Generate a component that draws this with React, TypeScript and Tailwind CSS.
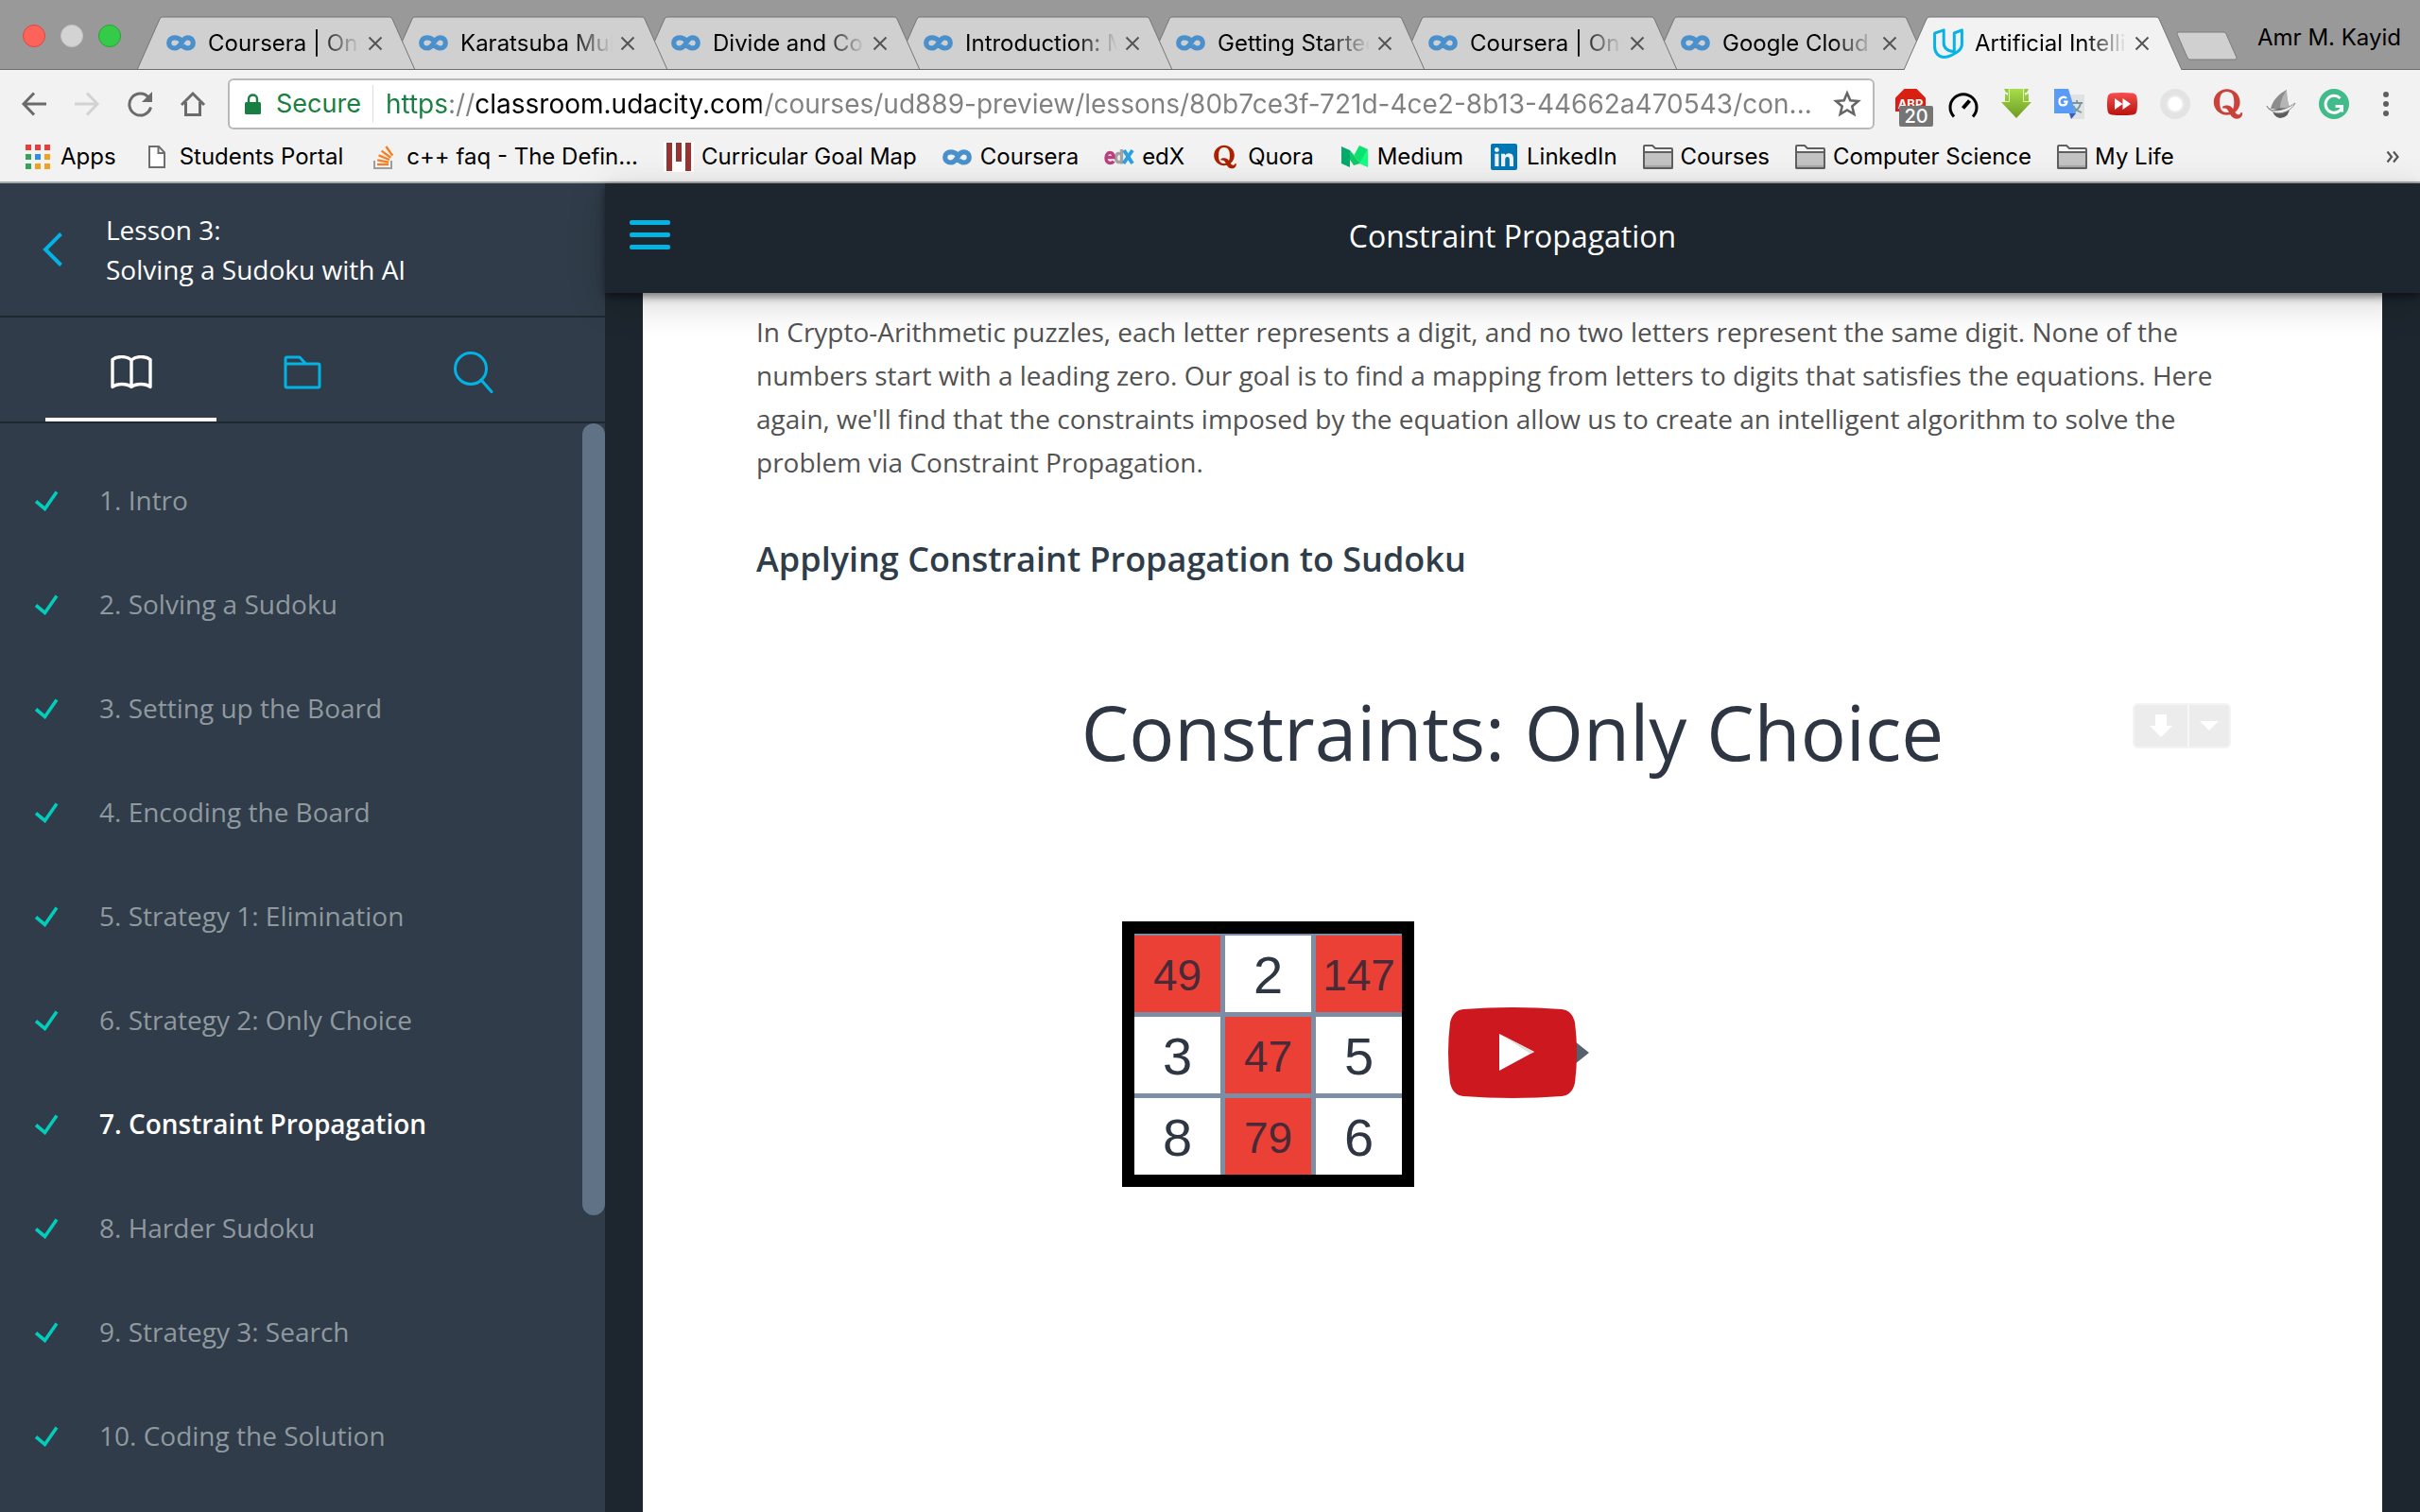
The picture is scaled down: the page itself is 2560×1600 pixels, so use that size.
import type { ReactNode } from "react";
import { FaLinkedin, FaQuora } from "react-icons/fa";

function CourseraIcon() {
  return (
    <svg viewBox="0 0 31 17" className="h-[17px] w-[31px]" fill="none" stroke="#4990cd" strokeWidth="5.2" aria-hidden="true">
      <path d="M15.6 5.6C13.6 3.6 11.6 2.8 9 2.8C5 2.8 2.7 5.3 2.7 8.4C2.7 11.7 5.2 14 9 14C16 14 15.6 2.8 22.4 2.8C26 2.8 28.3 5.3 28.3 8.5C28.3 11.7 26 14 22.4 14C20 14 18.4 13 17 11.2" />
    </svg>
  );
}

function UdacityIcon() {
  return (
    <svg viewBox="0 0 32 32" className="size-8" fill="none" stroke="#05b3e6" strokeWidth="3" strokeLinejoin="round" aria-hidden="true">
      <path d="M1.6 5.2L11.2 1.8V15.5C11.2 20.5 15 24.6 22.3 24.4V5L30.4 1.8V17C30.4 23 24 26 19 28.6C17 29.6 14 30.4 11.5 30.4C5.5 30.2 1.6 25.6 1.6 19.5Z" />
    </svg>
  );
}

function AppsIcon() {
  const colors = ["#f03a37", "#f03a37", "#f03a37", "#35a35c", "#2d8cf0", "#f0a21f", "#35a35c", "#f0a21f", "#f0a21f"];
  return (
    <svg viewBox="0 0 26 26" className="size-[26px]" aria-hidden="true">
      {colors.map((c, i) => (
        <rect key={i} x={(i % 3) * 10} y={Math.floor(i / 3) * 10} width="6" height="6" fill={c} />
      ))}
    </svg>
  );
}

function PageIcon() {
  return (
    <svg viewBox="0 0 18 24" className="h-6 w-[18px]" fill="#fff" stroke="#6e6e6e" strokeWidth="2" aria-hidden="true">
      <path d="M1 1H11L17 7.5V23H1Z" />
      <path d="M10.5 1V8H17" fill="none" />
    </svg>
  );
}

function StackIcon() {
  return (
    <svg viewBox="0 0 24 26" className="h-[26px] w-6" fill="none" aria-hidden="true">
      <path d="M2 17V25H20V17" stroke="#9c9fa1" strokeWidth="2" />
      <g stroke="#f48024" strokeWidth="2.4">
        <path d="M5 21H17" />
        <path d="M5.2 16.4L17.2 18.6" />
        <path d="M6.6 11.4L18 16" />
        <path d="M9.6 6.6L19.4 13.8" />
        <path d="M14.4 2L21.2 11.6" />
      </g>
    </svg>
  );
}

function GoalMapIcon() {
  return (
    <svg viewBox="0 0 32 32" className="size-8" aria-hidden="true">
      <rect width="32" height="32" fill="#fff" />
      <path d="M3 1h6v30H3zM13 1h6v20h-6zM23 1h6v30h-6z" fill="#993333" />
    </svg>
  );
}

function EdxIcon() {
  return (
    <svg viewBox="0 0 32 20" className="h-5 w-8" fill="none" aria-hidden="true">
      <path d="M18.5 2V17.5M18.5 8C17 5.5 12.5 5.5 12.5 11C12.5 16.5 17 16.5 18.5 14" stroke="#a3a3a3" strokeWidth="3.4" />
      <path d="M2.5 10.5H10C10 6.5 8.5 5.5 6.3 5.5C3.5 5.5 2 8 2 11C2 14.5 3.8 16.5 6.5 16.5C8.5 16.5 9.5 15.6 10 14.5" stroke="#b9417f" strokeWidth="3.4" />
      <path d="M21 3L30 17M30 3L20.5 17" stroke="#2ba0e4" strokeWidth="4" />
    </svg>
  );
}

function MediumIcon() {
  return (
    <svg viewBox="0 0 28 24" className="h-6 w-7" aria-hidden="true">
      <path d="M0 1L9 5V23L0 19Z" fill="#00ab6b" />
      <path d="M9 5L20 19L13 21L9 15Z" fill="#14c767" />
      <path d="M9 5L13.5 10L19 0L28 4L20 19Z" fill="#0be370" />
      <path d="M28 4V23L19 19Z" fill="#13ff80" />
    </svg>
  );
}

function FolderIcon() {
  return (
    <svg viewBox="0 0 32 26" className="h-[26px] w-8" stroke="#5f5f5f" strokeWidth="2" strokeLinejoin="round" aria-hidden="true">
      <path d="M1 24V2Q1 1 2 1H10L13 4H30Q31 4 31 5V24Q31 25 30 25H2Q1 25 1 24Z" fill="#f7f7f7" />
      <path d="M1 8H31V24Q31 25 30 25H2Q1 25 1 24Z" fill="#c3c3c3" />
      <path d="M2 23H30" stroke="#a8a8a8" />
    </svg>
  );
}

const tabs = ["Coursera | Online", "Karatsuba Multiply", "Divide and Conquer", "Introduction: Mod", "Getting Started w", "Coursera | Online", "Google Cloud Pl"];

function CloseIcon() {
  return (
    <svg viewBox="0 0 16 16" className="size-4" stroke="#555" strokeWidth="2" aria-hidden="true">
      <path d="M1.5 1.5L14.5 14.5M14.5 1.5L1.5 14.5" />
    </svg>
  );
}

function Tab({ title, active, order }: { title: string; active?: boolean; order: number }) {
  return (
    <div className="relative -mr-[27px] h-[57px] w-[294px]" style={{ zIndex: order }}>
      <svg viewBox="0 0 294 57" preserveAspectRatio="none" className="absolute inset-0 size-full" aria-hidden="true">
        <path
          d="M0 57L24 3Q25 1 27 1H267Q269 1 270 3L294 57"
          fill={active ? "#f2f2f2" : "#d0d0d0"}
          stroke="#757575"
          strokeWidth="1"
        />
        {!active && <path d="M0 56.5H294" stroke="#6c6c6c" />}
      </svg>
      <div className="relative flex h-full items-center pl-[31px]">
        <a href="#tab" className="flex min-w-0 items-center gap-3">
          <span className="flex w-8 shrink-0">{active ? <UdacityIcon /> : <CourseraIcon />}</span>
          <span className="w-[161px] overflow-hidden whitespace-nowrap mask-r-from-72% mask-r-to-100%">{title}</span>
        </a>
        <button type="button" aria-label={`Close ${title}`} className="ml-1 flex size-6 shrink-0 items-center justify-center">
          <CloseIcon />
        </button>
      </div>
    </div>
  );
}

function TabStrip() {
  return (
    <div className="flex h-[74px] items-end border-b border-[#6c6c6c] bg-[#999] pl-6">
      <div className="flex shrink-0 gap-4 self-start pt-[26px]">
        <button type="button" aria-label="Close window" className="size-6 rounded-full border border-[#e2463f] bg-[#fd625b]" />
        <button type="button" aria-label="Minimize window" className="size-6 rounded-full border border-[#c4c4c4] bg-[#d3d3d3]" />
        <button type="button" aria-label="Zoom window" className="size-6 rounded-full border border-[#25a534] bg-[#34cb49]" />
      </div>
      <nav aria-label="Browser tabs" className="isolate -mb-px ml-[17px] flex">
        {tabs.map((t, i) => (
          <Tab key={i} title={t} order={tabs.length - i} />
        ))}
        <Tab title="Artificial Intelligence" active order={20} />
      </nav>
      <button type="button" aria-label="New tab" className="ml-[21px] shrink-0 self-start pt-[33px]">
        <svg viewBox="0 0 66 32" className="h-8 w-[66px]" aria-hidden="true">
          <path d="M3 1H50Q52 1 53 3L64 28Q65 30 62 30H15Q13 30 12 28L1 3Q0 1 3 1Z" fill="#d0d0d0" stroke="#7d7d7d" />
        </svg>
      </button>
      <button type="button" className="ml-auto self-start pt-6 pr-5 leading-8 whitespace-nowrap">Amr M. Kayid</button>
    </div>
  );
}

function NavButton({ label, children }: { label: string; children: ReactNode }) {
  return (
    <button type="button" aria-label={label} className="flex size-7 shrink-0 items-center justify-center">
      <svg viewBox="0 0 28 28" className="size-7" fill="none" stroke="#6b6b6b" strokeWidth="3" aria-hidden="true">
        {children}
      </svg>
    </button>
  );
}

function Extension({ label, children }: { label: string; children: ReactNode }) {
  return (
    <button type="button" aria-label={label} className="relative size-8 shrink-0">
      <svg viewBox="0 0 32 32" className="size-8" aria-hidden="true">
        {children}
      </svg>
    </button>
  );
}

function Extensions() {
  return (
    <div className="flex shrink-0 items-center gap-6">
      <div className="relative flex">
        <Extension label="Ad blocker">
          <path d="M9.5 0H22.5L32 9.5V24H0V9.5Z" fill="#d81f12" />
          <text x="16" y="21" textAnchor="middle" fontSize="13" fontWeight="700" fill="#fff">ABP</text>
        </Extension>
        <span className="absolute top-[18px] left-1 w-9 rounded-xs bg-[#757575] text-center text-xl leading-[22px] font-medium text-white">20</span>
      </div>
      <Extension label="Speed">
        <path d="M6 29.5A14 14 0 1 1 26 29.5" fill="none" stroke="#000" strokeWidth="3" />
        <path d="M22.5 12.5L15.5 20.5" stroke="#000" strokeWidth="4" />
      </Extension>
      <Extension label="Downloader">
        <defs>
          <linearGradient id="down" x1="0" y1="0" x2="0" y2="1">
            <stop offset="0" stopColor="#a9dc4c" />
            <stop offset="1" stopColor="#6d9c22" />
          </linearGradient>
        </defs>
        <path d="M3 0H7V4H5ZM29 0H25V4H27Z" fill="#93cc3a" />
        <path d="M7 0H25V7L29 5V14H32L16 31L0 14H4V5L7 7Z" fill="url(#down)" />
        <path d="M8.5 0V13.5H2M23.5 0V13.5H30" fill="none" stroke="#dff5b5" strokeWidth="1" />
      </Extension>
      <Extension label="Translate">
        <path d="M12 6H32V32H17Z" fill="#dfe1e3" />
        <path d="M18 15H30M24 12V15M28 15C27 20 24 23 20 25M20.5 18C22 22 26 24 29 25" fill="none" stroke="#7796a0" strokeWidth="1.8" />
        <path d="M16 26H23L18 32Z" fill="#3a5bbf" />
        <path d="M0 0H15L23 26H0Z" fill="#5a9cf5" />
        <path d="M13 10C10.5 7.5 5.5 9 5.500 13.5C5.5 18.500 13 19 13.500 13.700H10" fill="none" stroke="#fff" strokeWidth="2.2" />
      </Extension>
      <Extension label="Playback">
        <defs>
          <linearGradient id="yt" x1="0" y1="0" x2="0" y2="1">
            <stop offset="0" stopColor="#f5504f" />
            <stop offset="1" stopColor="#b9120f" />
          </linearGradient>
        </defs>
        <path d="M5 4.5Q16 3.5 27 4.5Q31 5 31.5 9Q32.5 16 31.5 23Q31 27 27 27.5Q16 28.5 5 27.5Q1 27 .5 23Q-.5 16 .5 9Q1 5 5 4.5Z" fill="url(#yt)" />
        <path d="M8 10L16.5 16L8 22ZM16.5 10L25 16L16.5 22Z" fill="#fff" />
      </Extension>
      <Extension label="Recorder">
        <circle cx="16" cy="16" r="16" fill="#e3e3e3" />
        <circle cx="16" cy="16" r="9.5" fill="#ececec" />
        <circle cx="16" cy="16" r="7.5" fill="#fff" />
      </Extension>
      <button type="button" aria-label="Quora" className="flex size-8 shrink-0 items-center justify-center">
        <FaQuora className="size-9 shrink-0 text-[#c9433b]" />
      </button>
      <Extension label="Shark">
        <path d="M22 1C14 5 7 12 5 21H26C23 16 22 8 22 1Z" fill="#8c8c8c" />
        <path d="M22 1C18 7 15 14 15 21H26C23 16 22 8 22 1Z" fill="#b5b5b5" />
        <path d="M7 22Q16 20 25 20Q25 30 15 31Q8 30 7 22Z" fill="#5c5c5c" />
        <path d="M1 18C5 25 17 25 31 15C26 25 12 29 6 23Q2 22 1 18Z" fill="#efefef" stroke="#8f8f8f" strokeWidth="1" />
      </Extension>
      <Extension label="Grammar">
        <circle cx="16" cy="16" r="16" fill="#42bb8a" />
        <path d="M22.5 10A9 9 0 1 0 24.5 19.5M17.5 18.5H24.5V24.5" fill="none" stroke="#fff" strokeWidth="3" />
      </Extension>
    </div>
  );
}

function Toolbar() {
  return (
    <div className="flex h-[72px] items-center bg-[#f2f2f2] pr-[33px] pl-[22px]">
      <div className="flex shrink-0 gap-7">
        <NavButton label="Back">
          <path d="M27 14H3M14 2.5L3 14L14 25.5" />
        </NavButton>
        <NavButton label="Forward">
          <path d="M1 14H25M14 2.5L25 14L14 25.5" stroke="#d2d2d2" />
        </NavButton>
        <NavButton label="Reload">
          <path d="M23.5 7.5A11.5 11.5 0 1 0 25.5 17.5" />
          <path d="M27 1V12H16Z" fill="#6b6b6b" stroke="none" />
        </NavButton>
        <NavButton label="Home">
          <path d="M2 15L14 3L26 15M6.5 12V25.5H21.5V12" />
        </NavButton>
      </div>
      <div className="ml-[23px] flex h-[54px] min-w-0 flex-1 items-center rounded-md border-2 border-[#b9b9b9] bg-white pr-3 pl-4">
        <svg viewBox="0 0 17 22" className="h-[22px] w-[17px] shrink-0" aria-hidden="true">
          <rect y="9" width="17" height="13" rx="1.5" fill="#187e41" />
          <path d="M4 10V6C4 0 13 0 13 6V10" fill="none" stroke="#187e41" strokeWidth="2.4" />
        </svg>
        <label htmlFor="address" className="ml-4 text-[27px] text-[#187e41]">Secure</label>
        <span className="ml-3 h-10 w-px shrink-0 bg-[#dedede]" />
        <input
          id="address"
          type="text"
          defaultValue="https://classroom.udacity.com/courses/ud889-preview/lessons/80b7ce3f-721d-4ce2-8b13-44662a470543/con..."
          className="ml-[13px] h-full min-w-0 flex-1 bg-[linear-gradient(90deg,#187e41_67px,#808080_67px,#808080_95px,#000_95px,#000_397px,#808080_397px)] bg-clip-text text-[28px] text-transparent outline-none"
        />
        <button type="button" aria-label="Bookmark this page" className="shrink-0">
          <svg viewBox="0 0 30 30" className="size-[30px]" fill="none" stroke="#666" strokeWidth="2.6" aria-hidden="true">
            <path d="M15 3.5L18.3 11.3L26.7 12L20.3 17.5L22.3 25.8L15 21.4L7.7 25.8L9.7 17.5L3.3 12L11.7 11.3Z" />
          </svg>
        </button>
      </div>
      <div className="ml-[22px]">
        <Extensions />
      </div>
      <button type="button" aria-label="Menu" className="ml-9 flex shrink-0 flex-col gap-1">
        <span className="size-1.5 rounded-full bg-[#5f5f5f]" />
        <span className="size-1.5 rounded-full bg-[#5f5f5f]" />
        <span className="size-1.5 rounded-full bg-[#5f5f5f]" />
      </button>
    </div>
  );
}

const bookmarks: { label: string; icon: ReactNode }[] = [
  { label: "Apps", icon: <AppsIcon /> },
  { label: "Students Portal", icon: <PageIcon /> },
  { label: "c++ faq - The Defin...", icon: <StackIcon /> },
  { label: "Curricular Goal Map", icon: <GoalMapIcon /> },
  { label: "Coursera", icon: <CourseraIcon /> },
  { label: "edX", icon: <EdxIcon /> },
  { label: "Quora", icon: <FaQuora className="size-7 text-[#aa2200]" /> },
  { label: "Medium", icon: <MediumIcon /> },
  { label: "LinkedIn", icon: <FaLinkedin className="size-8 text-[#0077b5]" /> },
  { label: "Courses", icon: <FolderIcon /> },
  { label: "Computer Science", icon: <FolderIcon /> },
  { label: "My Life", icon: <FolderIcon /> },
];

function BookmarksBar() {
  return (
    <nav aria-label="Bookmarks" className="flex h-12 items-center border-b-2 border-[#a9abad] bg-[#f2f2f2] pr-[22px] pb-1.5 pl-6">
      <div className="flex gap-[27px]">
        {bookmarks.map((b) => (
          <a key={b.label} href="#bookmark" className="flex items-center gap-2 whitespace-nowrap">
            <span className="flex w-8 shrink-0 justify-center">{b.icon}</span>
            {b.label}
          </a>
        ))}
      </div>
      <button type="button" aria-label="More bookmarks" className="ml-auto">
        <svg viewBox="0 0 14 14" className="size-3.5" fill="none" stroke="#555" strokeWidth="2.2" aria-hidden="true">
          <path d="M1.5 1.5L6 7L1.5 12.5M8 1.5L12.5 7L8 12.5" />
        </svg>
      </button>
    </nav>
  );
}

const lessons = [
  "1. Intro",
  "2. Solving a Sudoku",
  "3. Setting up the Board",
  "4. Encoding the Board",
  "5. Strategy 1: Elimination",
  "6. Strategy 2: Only Choice",
  "7. Constraint Propagation",
  "8. Harder Sudoku",
  "9. Strategy 3: Search",
  "10. Coding the Solution",
];

function Sidebar() {
  return (
    <aside className="flex w-1/4 shrink-0 flex-col bg-[#303c49]">
      <header className="flex h-[142px] shrink-0 items-center border-b-2 border-[#1f2831] pl-11">
        <button type="button" aria-label="Back to lessons">
          <svg viewBox="0 0 24 36" className="h-9 w-6" fill="none" stroke="#02b3e4" strokeWidth="4" aria-hidden="true">
            <path d="M20.5 1.5L4 18L20.5 34.5" />
          </svg>
        </button>
        <h2 className="ml-11 text-[28px] leading-[42px] text-white">
          Lesson 3:
          <br />
          Solving a Sudoku with AI
        </h2>
      </header>
      <div className="flex h-28 shrink-0 border-b-2 border-[#1f2831] px-12">
        <button type="button" aria-label="Lessons" className="flex flex-1 items-center justify-center border-b-4 border-white pt-2.5">
          <svg viewBox="0 0 44 36" className="h-9 w-11" fill="none" stroke="#fff" strokeWidth="3.4" strokeLinejoin="round" aria-hidden="true">
            <path d="M22 5C17 .5 7 .5 2 4.5V33.5C7 29.5 17 29.5 22 33.5C27 29.5 37 29.5 42 33.5V4.5C37 .5 27 .5 22 5ZM22 5V33.5" />
          </svg>
        </button>
        <button type="button" aria-label="Resources" className="flex flex-1 items-center justify-center pt-1.5">
          <svg viewBox="0 0 40 36" className="h-9 w-10" fill="none" stroke="#02b3e4" strokeWidth="3" strokeLinejoin="round" aria-hidden="true">
            <path d="M2 9V3.5Q2 2 3.5 2H17L23.5 9M2 9H36.5Q38 9 38 10.5V32.5Q38 34 36.5 34H3.5Q2 34 2 32.5Z" />
          </svg>
        </button>
        <button type="button" aria-label="Search" className="flex flex-1 items-center justify-center pt-1.5">
          <svg viewBox="0 0 44 46" className="h-[46px] w-11" fill="none" stroke="#02b3e4" strokeWidth="3" strokeLinecap="round" aria-hidden="true">
            <circle cx="19" cy="19" r="16.5" />
            <path d="M30 31L41 43.5" />
          </svg>
        </button>
      </div>
      <div className="flex min-h-0 flex-1 overflow-hidden">
        <ol className="flex-1 pt-[27px]">
          {lessons.map((l) => (
            <li key={l}>
              <a
                href="#lesson"
                className={
                  l.startsWith("7.")
                    ? "flex h-[110px] items-center gap-[43px] pl-9 text-[28px] font-semibold text-white"
                    : "flex h-[110px] items-center gap-[43px] pl-9 text-[28px] text-[#8f999f]"
                }
              >
                <svg viewBox="0 0 26 22" className="h-[22px] w-[26px] shrink-0" fill="none" stroke="#02ccba" strokeWidth="3.6" aria-hidden="true">
                  <path d="M2 11.5L11.5 19.5L24 1.5" />
                </svg>
                {l}
              </a>
            </li>
          ))}
        </ol>
        <div className="h-8/11 w-6 rounded-full bg-[#5f7286]" />
      </div>
    </aside>
  );
}

const board = ["49", "2", "147", "3", "47", "5", "8", "79", "6"];

function Slide() {
  return (
    <section aria-label="Video: Constraints, Only Choice" className="relative mt-12 aspect-video w-full text-[#2d3642]">
      <h3 className="pt-14 text-center text-[80px] leading-[108px]">Constraints: Only Choice</h3>
      <div className="mt-[147px] ml-[387px] w-[309px] border-[13px] border-black bg-[#7b8ea5] pt-0.5 font-['Liberation_Sans',Arial,sans-serif]">
        <div className="grid grid-cols-3 gap-[5px]">
          {board.map((v) => (
            <div
              key={v}
              className={
                v.length > 1
                  ? "flex h-[81px] items-center justify-center bg-[#eb4036] pt-1 text-[46px] text-[#4a2a36]"
                  : "flex h-[81px] items-center justify-center bg-white pt-1 text-[56px]"
              }
            >
              {v}
            </div>
          ))}
        </div>
      </div>
      <button type="button" aria-label="Play video" className="absolute top-1/2 left-1/2 -translate-x-1/2 -translate-y-1/2">
        <svg viewBox="0 0 164 96" className="h-24 w-[164px]" aria-hidden="true">
          <path d="M148 36L163 48L148 60Z" fill="#56616d" />
          <path d="M30 2Q82 -2 134 2Q145 3 148 16Q152 48 148 80Q145 93 134 94Q82 98 30 94Q19 93 16 80Q12 48 16 16Q19 3 30 2Z" fill="#cc181e" />
          <path d="M68 28L105 47L68 67Z" fill="#fff" />
          <path d="M68 28L105 47L101 49Z" fill="#ddd" />
        </svg>
      </button>
      <div className="absolute top-20 right-10 flex h-12 w-[104px] gap-0.5 overflow-hidden rounded-md border-2 border-[#f4f4f4] bg-[#f7f7f7]">
        <button type="button" aria-label="Download video" className="flex flex-[4] items-center justify-center bg-[#ececec]">
          <svg viewBox="0 0 24 24" className="size-6" fill="#fff" aria-hidden="true">
            <path d="M6 0H18V12H24L12 24L0 12H6Z" />
          </svg>
        </button>
        <button type="button" aria-label="Download options" className="flex flex-[3] items-center justify-center bg-[#ececec]">
          <svg viewBox="0 0 20 10" className="h-2.5 w-5" fill="#fff" aria-hidden="true">
            <path d="M0 0H20L10 10Z" />
          </svg>
        </button>
      </div>
    </section>
  );
}

export default function App() {
  return (
    <div className="flex h-screen flex-col overflow-hidden bg-[#1d262e] font-['Inter',sans-serif] text-2xl text-black">
      <div className="shrink-0">
        <TabStrip />
        <Toolbar />
        <BookmarksBar />
      </div>
      <div className="flex min-h-0 flex-1 font-['Open_Sans',sans-serif]">
        <Sidebar />
        <main className="flex min-w-0 flex-1 flex-col">
          <header className="relative z-10 grid h-[116px] shrink-0 grid-cols-[1fr_auto_1fr] items-center bg-[#1d262e] px-[26px] pb-[3px] shadow-[0_4px_8px_rgba(0,0,0,0.45),0_10px_40px_rgba(0,0,0,0.18)]">
            <button type="button" aria-label="Toggle sidebar" className="flex w-[43px] flex-col gap-2 pb-1">
              <span className="h-[5px] w-full rounded-xs bg-[#02b3e4]" />
              <span className="h-[5px] w-full rounded-xs bg-[#02b3e4]" />
              <span className="h-[5px] w-full rounded-xs bg-[#02b3e4]" />
            </button>
            <h1 className="text-[32px] text-white">Constraint Propagation</h1>
          </header>
          <article className="mx-10 min-h-0 flex-1 overflow-hidden bg-white px-30 pt-[18px]">
            <p className="text-[28px] leading-[46px] text-[#525252]">
              In Crypto-Arithmetic puzzles, each letter represents a digit, and no two letters represent the same digit. None of the
              numbers start with a leading zero. Our goal is to find a mapping from letters to digits that satisfies the equations. Here
              again, we'll find that the constraints imposed by the equation allow us to create an intelligent algorithm to solve the
              problem via Constraint Propagation.
            </p>
            <h2 className="mt-14 text-4xl leading-[48px] font-semibold text-[#2e3d49]">Applying Constraint Propagation to Sudoku</h2>
            <Slide />
          </article>
        </main>
      </div>
    </div>
  );
}
